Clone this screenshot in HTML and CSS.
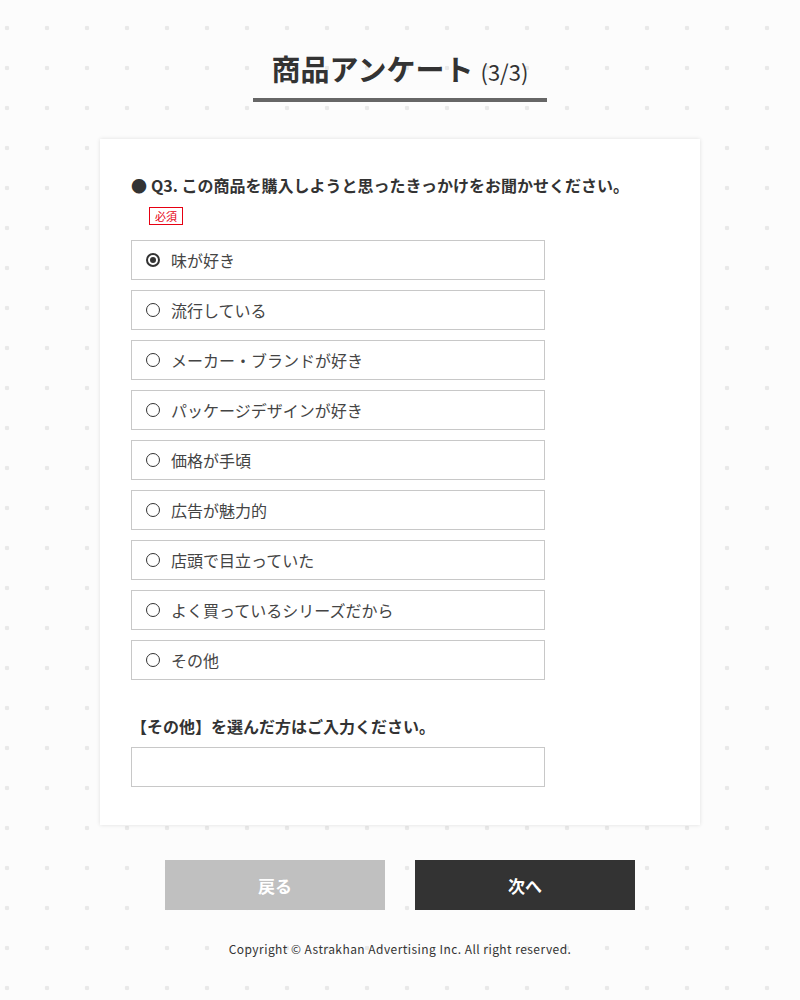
FILE: index.html
```html
<!DOCTYPE html>
<html lang="ja">
<head>
<meta charset="utf-8">
<title>商品アンケート</title>
<link rel="stylesheet" href="styles.css">
</head>
<body>
<div class="page">
  <header class="head">
    <h1 class="title">商品アンケート<span class="step">(3/3)</span></h1>
  </header>
  <main class="card">
    <p class="question"><span class="bullet">●</span>Q3. この商品を購入しようと思ったきっかけをお聞かせください。</p>
    <span class="required">必須</span>
    <ul class="options">
      <li class="option"><span class="radio checked"></span>味が好き</li>
      <li class="option"><span class="radio"></span>流行している</li>
      <li class="option"><span class="radio"></span>メーカー・ブランドが好き</li>
      <li class="option"><span class="radio"></span>パッケージデザインが好き</li>
      <li class="option"><span class="radio"></span>価格が手頃</li>
      <li class="option"><span class="radio"></span>広告が魅力的</li>
      <li class="option"><span class="radio"></span>店頭で目立っていた</li>
      <li class="option"><span class="radio"></span>よく買っているシリーズだから</li>
      <li class="option"><span class="radio"></span>その他</li>
    </ul>
    <p class="other-label">【その他】を選んだ方はご入力ください。</p>
    <div class="text-input"></div>
  </main>
  <div class="buttons">
    <button class="btn btn-back">戻る</button>
    <button class="btn btn-next">次へ</button>
  </div>
  <footer class="copy">Copyright © Astrakhan Advertising Inc. All right reserved.</footer>
</div>
</body>
</html>
```

FILE: styles.css
```css
* { box-sizing: border-box; }
html, body { margin: 0; padding: 0; }
body {
  font-family: "Noto Sans CJK JP", "Noto Sans", sans-serif;
  color: #333;
  background-color: #fcfcfc;
  background-image: radial-gradient(circle, #e9e9e9 2px, rgba(233,233,233,0) 2.6px);
  background-size: 40px 40px;
  background-position: -13px 8px;
  min-height: 1000px;
}
.page {
  display: flex;
  flex-direction: column;
  align-items: center;
  padding-top: 47px;
}
.head { display: flex; justify-content: center; }
.title {
  margin: 0;
  font-size: 29px;
  font-weight: 700;
  line-height: 42px;
  padding: 0 19px 6px 19px;
  border-bottom: 4px solid #666;
  letter-spacing: 0;
}
.step {
  font-size: 22px;
  font-weight: 400;
  margin-left: 7px;
}
.card {
  margin-top: 37px;
  width: 600px;
  background: #fff;
  box-shadow: 0 0 4px rgba(0,0,0,0.12);
  padding: 34px 31px 38px 31px;
  display: flex;
  flex-direction: column;
  align-items: flex-start;
}
.question {
  margin: 0;
  font-size: 16px;
  font-weight: 700;
  line-height: 24px;
}
.bullet { margin-right: 4px; }
.required {
  margin: 10px 0 0 18px;
  border: 1px solid #e60012;
  color: #e60012;
  font-size: 11px;
  line-height: 16px;
  padding: 0 5px;
}
.options {
  list-style: none;
  margin: 15px 0 0 0;
  padding: 0;
  display: flex;
  flex-direction: column;
  gap: 10px;
}
.option {
  width: 414px;
  height: 40px;
  border: 1px solid #c8c8c8;
  display: flex;
  align-items: center;
  padding-left: 14px;
  font-size: 16px;
  color: #444;
}
.radio {
  width: 14px;
  height: 14px;
  border-radius: 50%;
  border: 1px solid #333;
  margin-right: 11px;
  flex: none;
  display: flex;
  align-items: center;
  justify-content: center;
}
.radio.checked { border: 2px solid #333; }
.radio.checked::after {
  content: "";
  width: 6px;
  height: 6px;
  border-radius: 50%;
  background: #333;
}
.other-label {
  margin: 34px 0 0 0;
  font-size: 16px;
  font-weight: 700;
  line-height: 24px;
}
.text-input {
  margin-top: 9px;
  width: 414px;
  height: 40px;
  border: 1px solid #c8c8c8;
  background: #fff;
}
.buttons {
  margin-top: 35px;
  display: flex;
  gap: 30px;
}
.btn {
  width: 220px;
  height: 50px;
  border: none;
  font-family: inherit;
  font-size: 17px;
  font-weight: 700;
  color: #fff;
  padding: 0;
}
.btn-back { background: #c0c0c0; }
.btn-next { background: #333; }
.copy {
  margin-top: 30px;
  font-size: 12px;
  line-height: 18px;
  letter-spacing: 0.45px;
  color: #333;
}
```
